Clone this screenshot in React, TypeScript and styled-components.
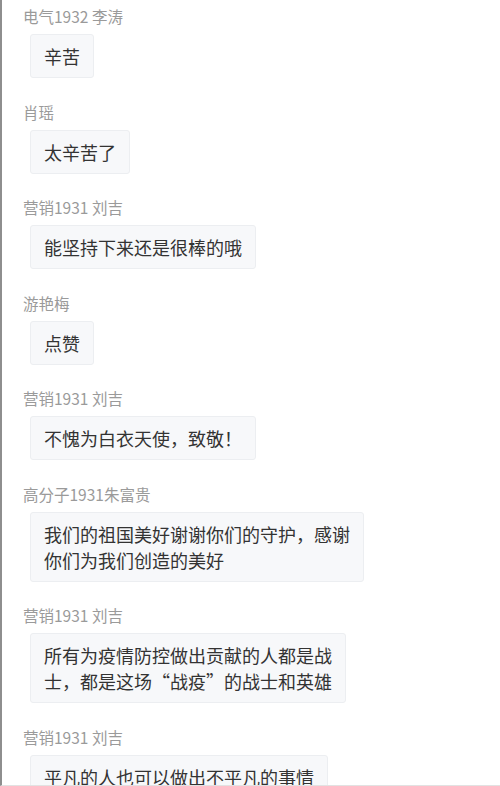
import React from "react";
import styled, { createGlobalStyle } from "styled-components";

interface Comment {
  id: number;
  author: string;
  lines: string[]; // các dòng như trong ảnh gốc
}

const comments: Comment[] = [
  { id: 1, author: "电气1932 李涛", lines: ["辛苦"] },
  { id: 2, author: "肖瑶", lines: ["太辛苦了"] },
  { id: 3, author: "营销1931 刘吉", lines: ["能坚持下来还是很棒的哦"] },
  { id: 4, author: "游艳梅", lines: ["点赞"] },
  { id: 5, author: "营销1931 刘吉", lines: ["不愧为白衣天使，致敬！"] },
  { id: 6, author: "高分子1931朱富贵", lines: ["我们的祖国美好谢谢你们的守护，感谢", "你们为我们创造的美好"] },
  { id: 7, author: "营销1931 刘吉", lines: ["所有为疫情防控做出贡献的人都是战", "士，都是这场“战疫”的战士和英雄"] },
  { id: 8, author: "营销1931 刘吉", lines: ["平凡的人也可以做出不平凡的事情"] },
];

const App: React.FC = () => {
  return (
    <>
      <GlobalStyle />
      <Page>
        {comments.map((c) => (
          <Item key={c.id}>
            <Author>{c.author}</Author>
            <Bubble>
              {c.lines.map((line, i) => (
                <Line key={i}>{line}</Line>
              ))}
            </Bubble>
          </Item>
        ))}
      </Page>
    </>
  );
};

const GlobalStyle = createGlobalStyle`
  html, body {
    margin: 0;
    padding: 0;
    background: #ffffff;
  }
  body {
    font-family: "Noto Sans CJK SC", "Noto Sans", sans-serif;
  }
`;

const Page = styled.div`
  box-sizing: border-box;
  width: 500px;
  height: 786px;
  overflow: hidden;
  border-left: 2px solid #8e8e8e;
  border-bottom: 1px solid #e2e2e2;
  padding: 6px 0 0 21px;
  display: flex;
  flex-direction: column;
  gap: 23.5px;
`;

const Item = styled.div`
  display: flex;
  flex-direction: column;
  align-items: flex-start;
  gap: 8px;
`;

const Author = styled.div`
  font-size: 15.5px;
  line-height: 20px;
  color: #9a9a9a;
`;

const Bubble = styled.div`
  margin-left: 7px;
  padding: 8px 13px;
  font-size: 18px;
  line-height: 26px;
  color: #333333;
  background: #f7f8fa;
  border: 1px solid #eceef1;
  border-radius: 3px;
  flex-shrink: 0;
`;

const Line = styled.div`
  white-space: nowrap;
`;

export default App;
